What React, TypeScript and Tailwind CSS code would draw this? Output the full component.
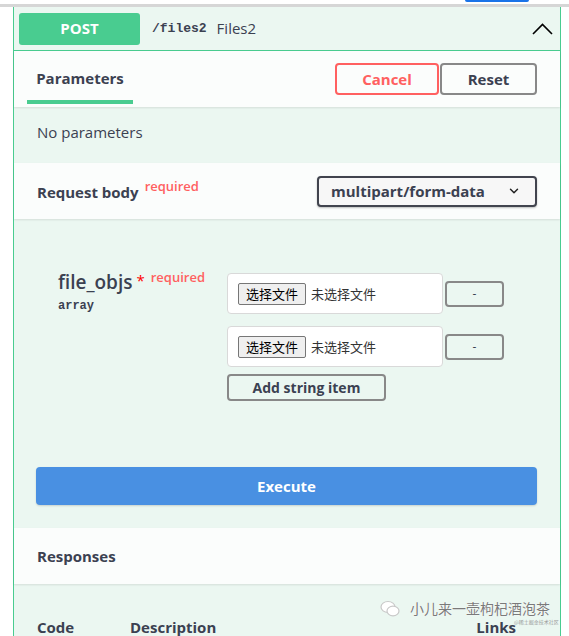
import { ChevronDown } from "lucide-react";

const sans = "font-['Open_Sans','Noto_Sans_CJK_SC',sans-serif]";
const mono = "font-['Liberation_Mono',monospace]";

function FileRow() {
  return (
    <div className="flex items-center gap-[2px]">
      <div className="w-[216px] h-[41px] bg-white border border-[#d9d9d9] rounded-[4px] flex items-center pl-[10px]">
        <span className="h-[22px] px-[7px] flex items-center bg-[#efefef] border border-[#767676] rounded-[2px] text-[13px] text-black font-['Noto_Sans_CJK_SC',sans-serif]">
          选择文件
        </span>
        <span className="ml-[5px] text-[13px] text-[#333] font-['Noto_Sans_CJK_SC',sans-serif]">未选择文件</span>
      </div>
      <button className="w-[59px] h-[26px] border-2 border-[#888] rounded-[4px] bg-transparent text-[12px] text-[#3b4151]">
        -
      </button>
    </div>
  );
}

export default function App() {
  return (
    <div className={`w-[569px] h-[636px] overflow-hidden bg-white relative ${sans}`}>
      {/* browser chrome remnant */}
      <div className="h-[4px] bg-white relative">
        <div className="absolute left-[465px] top-0 w-[64px] h-[2px] bg-[#1a73e8] rounded-b" />
      </div>
      <div className="h-[3px] bg-[#d6d6d6]" />

      <div className="ml-[13px] w-[548px] border-x border-[#49cc90] bg-[#ebf7f1] text-[#3b4151]">
        {/* operation header */}
        <div className="h-[44px] flex items-center pl-[5px] pr-[7px] border-b border-[#49cc90]">
          <div className="w-[121px] h-[32px] rounded-[3px] bg-[#49cc90] text-white text-[15px] font-bold flex items-center justify-center">
            POST
          </div>
          <span className={`ml-[12px] text-[13px] font-bold ${mono}`}>/files2</span>
          <span className="ml-[10px] text-[15px]">Files2</span>
          <svg className="ml-auto" width="21" height="12" viewBox="0 0 21 12" fill="none" stroke="#000" strokeWidth="1.6">
            <polyline points="1,11 10.5,1.5 20,11" />
          </svg>
        </div>

        {/* tab header */}
        <div className="h-[56px] bg-[#fbfdfc] flex items-end justify-between pl-[13px] pr-[23px] shadow-[0_1px_2px_rgba(0,0,0,0.1)]">
          <div className="w-[106px] flex flex-col items-center">
            <span className="text-[15px] font-bold">Parameters</span>
            <div className="mt-[11px] mb-[3px] w-full h-[4px] bg-[#49cc90]" />
          </div>
          <div className="flex self-center">
            <button className="w-[104px] h-[32px] border-2 border-[#ff6060] rounded-[4px] text-[#ff6060] text-[15px] font-bold">
              Cancel
            </button>
            <button className="ml-[1px] w-[97px] h-[32px] border-2 border-[#888] rounded-[4px] text-[15px] font-bold">
              Reset
            </button>
          </div>
        </div>

        {/* no params */}
        <div className="h-[56px] flex items-center pl-[23px] pb-[6px] text-[15px]">No parameters</div>

        {/* request body header */}
        <div className="h-[56px] bg-[#fbfdfc] flex items-center justify-between pl-[23px] pr-[23px] shadow-[0_1px_2px_rgba(0,0,0,0.1)]">
          <div className="flex items-start">
            <span className="text-[15px] font-bold mt-[3px]">Request body</span>
            <span className="ml-[6px] text-[13px] font-semibold text-[#ff6060] -mt-[1px]">required</span>
          </div>
          <div className="w-[220px] h-[31px] border-2 border-[#41444e] rounded-[4px] bg-[#f7f7f7] flex items-center justify-between pl-[12px] pr-[14px] shadow-[0_1px_2px_rgba(0,0,0,0.25)]">
            <span className="text-[15px] font-bold">multipart/form-data</span>
            <ChevronDown size={14} strokeWidth={2.5} color="#222" />
          </div>
        </div>

        {/* body params */}
        <div className="pt-[54px] pb-[23px] pl-[23px] pr-[23px]">
          <div className="flex">
            <div className="w-[190px] pl-[21px] -mt-[3px]">
              <div className="flex items-start">
                <span className="text-[19px] font-semibold leading-[24px]">file_objs</span>
                <span className="ml-[4px] text-[#ff0000] text-[15px] leading-[20px]">*</span>
                <span className="ml-[6px] text-[13px] font-semibold text-[#ff6060] leading-[16px] -mt-[1px]">required</span>
              </div>
              <div className={`mt-[3px] text-[12px] font-bold ${mono}`}>array</div>
            </div>
            <div className="flex flex-col">
              <FileRow />
              <div className="h-[12px]" />
              <FileRow />
              <button className="mt-[7px] w-[159px] h-[27px] border-2 border-[#888] rounded-[4px] text-[14px] font-bold">
                Add string item
              </button>
            </div>
          </div>

          <button className="mt-[66px] -ml-[1px] w-[501px] h-[38px] rounded-[4px] bg-[#4990e2] text-white text-[15px] font-bold shadow-[0_1px_2px_rgba(0,0,0,0.15)]">
            Execute
          </button>
        </div>

        {/* responses */}
        <div className="h-[56px] bg-[#fbfdfc] flex items-center pl-[23px] text-[15px] font-bold shadow-[0_1px_2px_rgba(0,0,0,0.1)]">
          Responses
        </div>

        <div className="h-[60px] flex items-start pt-[32px] pl-[23px] text-[15px] font-bold">
          <span className="w-[93px]">Code</span>
          <span>Description</span>
          <span className="ml-auto mr-[44px]">Links</span>
        </div>
      </div>

      {/* watermark */}
      <div className="absolute left-[380px] top-[598px] flex items-center whitespace-nowrap">
        <svg width="20" height="18" viewBox="0 0 20 18" fill="none" stroke="#c8c8c8" strokeWidth="1.2">
          <ellipse cx="8" cy="7" rx="7" ry="5.5" fill="#fff" />
          <ellipse cx="13" cy="11" rx="6" ry="4.8" fill="#fff" />
        </svg>
        <span className="ml-[10px] text-[14px] text-[#7a7a7a] font-['Noto_Sans_CJK_SC',sans-serif] [text-shadow:0_0_1px_#fff,0_0_1px_#fff]">
          小儿来一壶枸杞酒泡茶
        </span>
      </div>
      <div className="absolute left-[514px] top-[619px] text-[5px] leading-[6px] whitespace-nowrap text-[#999] font-['Noto_Sans_CJK_SC',sans-serif]">
        @稀土掘金技术社区
      </div>
    </div>
  );
}
